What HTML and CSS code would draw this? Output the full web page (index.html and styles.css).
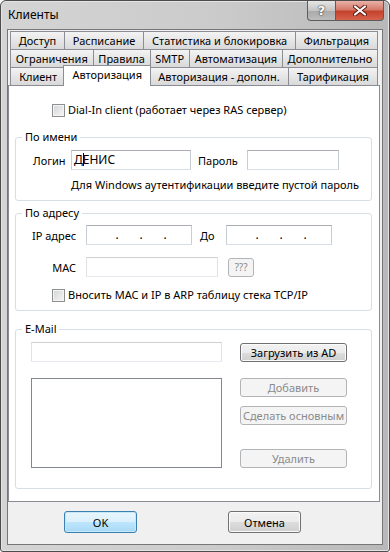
FILE: index.html
```html
<!DOCTYPE html>
<html lang="ru">

<head>
    <meta charset="UTF-8">
    <meta name="viewport" content="width=device-width, initial-scale=1.0">
    <title>Клиенты</title>
    <link rel="stylesheet" href="styles.css">
</head>

<body>
    <div class="window">
        <div class="titlebar">
            <span class="title">Клиенты</span>
            <div class="caption-buttons">
                <div class="cap-btn help">?</div>
                <div class="cap-btn close">
                    <svg width="14" height="11" viewBox="0 0 14 11">
                        <path d="M2 1.5 L12 9.5 M12 1.5 L2 9.5" stroke="#5a1a12" stroke-width="4" stroke-linecap="round" />
                        <path d="M2 1.5 L12 9.5 M12 1.5 L2 9.5" stroke="#ffffff" stroke-width="2.2" stroke-linecap="round" />
                    </svg>
                </div>
            </div>
        </div>

        <div class="client">
            <div class="tabs">
                <div class="tab-row">
                    <div class="tab">Доступ</div>
                    <div class="tab">Расписание</div>
                    <div class="tab">Статистика и блокировка</div>
                    <div class="tab">Фильтрация</div>
                </div>
                <div class="tab-row">
                    <div class="tab">Ограничения</div>
                    <div class="tab">Правила</div>
                    <div class="tab">SMTP</div>
                    <div class="tab">Автоматизация</div>
                    <div class="tab">Дополнительно</div>
                </div>
                <div class="tab-row">
                    <div class="tab">Клиент</div>
                    <div class="tab active">Авторизация</div>
                    <div class="tab">Авторизация - дополн.</div>
                    <div class="tab">Тарификация</div>
                </div>
            </div>

            <div class="panel">
                <label class="check-row dial-in">
                    <span class="checkbox"></span>
                    <span>Dial-In client (работает через RAS сервер)</span>
                </label>

                <div class="group by-name">
                    <div class="group-title">По имени</div>
                    <div class="form-row login-row">
                        <span class="lbl lbl-login">Логин</span>
                        <div class="textbox login">Д<span class="caret"></span>ЕНИС</div>
                        <span class="lbl lbl-pass">Пароль</span>
                        <div class="textbox pass"></div>
                    </div>
                    <div class="hint">Для Windows аутентификации введите пустой пароль</div>
                </div>

                <div class="group by-address">
                    <div class="group-title">По адресу</div>
                    <div class="form-row ip-row">
                        <span class="lbl lbl-addr">IP адрес</span>
                        <div class="textbox ip"><span>.</span><span>.</span><span>.</span></div>
                        <span class="lbl lbl-to">До</span>
                        <div class="textbox ip"><span>.</span><span>.</span><span>.</span></div>
                    </div>
                    <div class="form-row mac-row">
                        <span class="lbl lbl-addr">MAC</span>
                        <div class="textbox mac dim"></div>
                        <div class="btn disabled tiny">???</div>
                    </div>
                    <label class="check-row arp">
                        <span class="checkbox"></span>
                        <span>Вносить MAC и IP в ARP таблицу стека TCP/IP</span>
                    </label>
                </div>

                <div class="group email">
                    <div class="group-title">E-Mail</div>
                    <div class="email-grid">
                        <div class="textbox mail dim"></div>
                        <div class="btn load">Загрузить из AD</div>
                        <div class="listbox"></div>
                        <div class="side-buttons">
                            <div class="btn disabled">Добавить</div>
                            <div class="btn disabled">Сделать основным</div>
                            <div class="btn disabled last">Удалить</div>
                        </div>
                    </div>
                </div>
            </div>

            <div class="footer">
                <div class="btn big default">OK</div>
                <div class="btn big">Отмена</div>
            </div>
        </div>
    </div>
</body>

</html>
```

FILE: styles.css
```css
* {
    box-sizing: border-box;
}
body {
    margin: 0;
    font-family: "Noto Sans", "Open Sans", sans-serif;
    font-size: 11px;
    color: #000;
    background: #fff;
}
.window {
    width: 390px;
    height: 552px;
    display: flex;
    flex-direction: column;
    border: 1px solid #4c4c4c;
    border-radius: 6px 6px 3px 3px;
    background: linear-gradient(to right, #d4d4d4, #cbcbcb 55%, #b8b8b8);
    box-shadow: inset 0 0 0 1px #e4e4e4;
}

/* title bar */
.titlebar {
    height: 28px;
    display: flex;
    align-items: flex-start;
}
.title {
    padding: 6px 0 0 7px;
    line-height: 16px;
    font-size: 12px;
}
.caption-buttons {
    margin-left: auto;
    margin-right: 5px;
    display: flex;
}
.cap-btn {
    height: 20px;
    border: 1px solid #5c5c5c;
    border-top: 0;
    display: flex;
    align-items: center;
    justify-content: center;
}
.help {
    width: 28px;
    border-radius: 0 0 0 4px;
    border-right: 0;
    background: linear-gradient(#e6e6e6, #c4c4c4 50%, #a9a9a9 51%, #bdbdbd);
    color: #fff;
    font-family: "DejaVu Sans", sans-serif;
    font-weight: bold;
    font-size: 13px;
    text-shadow: 0 0 2px #333, 0 0 1px #333;
}
.close {
    width: 49px;
    border-radius: 0 0 4px 0;
    background: linear-gradient(#eab2a8, #d47a6a 45%, #c4412d 55%, #d7624c);
}

/* client area */
.client {
    flex: 1;
    margin: 0 6px 6px;
    border: 1px solid #777;
    background: #f0f0f0;
}
.tabs {
    margin: 1px 0 0 2px;
    width: 368px;
}
.tab-row {
    display: flex;
    height: 18px;
}
.tab {
    flex: 1 1 auto;
    min-width: 0;
    white-space: nowrap;
    overflow: hidden;
    text-align: center;
    line-height: 17px;
    border: 1px solid #8c8e96;
    border-bottom: 0;
    margin-right: -1px;
    background: linear-gradient(#f3f3f3, #e6e6e6 50%, #d9d9d9);
}
.tab:last-child {
    margin-right: 0;
}
.tab.active {
    position: relative;
    z-index: 1;
    align-self: flex-start;
    height: 21px;
    margin: -2px -2px 0 -2px;
    background: #fff;
    line-height: 17px;
}

.panel {
    height: 417px;
    margin-right: 2px;
    border: 1px solid #898c95;
    background: #fff;
    padding: 0 7px 0 6px;
}

.check-row {
    display: flex;
    align-items: center;
    gap: 3px;
    height: 16px;
    line-height: 16px;
}
.dial-in {
    margin-top: 16px;
    padding-left: 37px;
}
.arp {
    margin-top: 10px;
    padding-left: 36px;
}
.checkbox {
    width: 13px;
    height: 13px;
    flex: none;
    border: 1px solid #8e8f8f;
    background: linear-gradient(135deg, #d2d4d6, #f6f6f6);
    box-shadow: inset 0 0 0 1px #f4f4f4;
}

.group {
    border: 1px solid #d5dfe5;
    border-radius: 3px;
    padding-bottom: 7px;
}
.group-title {
    width: fit-content;
    margin: -9px 0 0 6px;
    padding: 0 3px;
    background: #fff;
    line-height: 16px;
}
.by-name {
    margin-top: 19px;
}
.by-address {
    margin-top: 12px;
}
.email {
    margin-top: 18px;
    padding-bottom: 20px;
}

.form-row {
    display: flex;
    align-items: center;
}
.login-row {
    margin-top: 5px;
    padding-left: 17px;
}
.ip-row {
    margin-top: 4px;
    padding-left: 16px;
}
.mac-row {
    margin-top: 12px;
    padding-left: 16px;
}
.lbl {
    white-space: nowrap;
}
.lbl-login {
    width: 38px;
}
.lbl-pass {
    width: 49px;
    margin-left: 7px;
}
.lbl-addr {
    width: 44px;
    margin-right: 10px;
    text-align: right;
}
.lbl-to {
    width: 26px;
    margin-left: 8px;
}

.textbox {
    height: 20px;
    border: 1px solid;
    border-color: #abadb3 #c9ced6 #d8dee6 #c9ced6;
    background: #fff;
    line-height: 18px;
    padding-left: 2px;
    font-size: 12px;
}
.textbox.dim {
    border-color: #cdcfd3 #e0e2e6 #e6e9ee #e0e2e6;
}
.login {
    width: 120px;
}
.caret {
    display: inline-block;
    width: 1px;
    height: 13px;
    margin: 0 -1px 0 0;
    vertical-align: -2px;
    background: #000;
}
.pass {
    width: 92px;
}
.hint {
    margin-top: 7px;
    padding-left: 55px;
    line-height: 16px;
    white-space: nowrap;
}
.ip {
    width: 106px;
    display: flex;
    justify-content: space-around;
    padding: 0 14px 0 18px;
}
.mac {
    width: 132px;
}

.btn {
    height: 19px;
    border: 1px solid #707070;
    border-radius: 3px;
    display: flex;
    align-items: center;
    justify-content: center;
    white-space: nowrap;
    background: linear-gradient(#f2f2f2, #ebebeb 50%, #dddddd 51%, #cfcfcf);
    box-shadow: inset 0 0 0 1px #fbfbfb;
}
.btn.disabled {
    border-color: #b2b5b8;
    background: #f4f4f4;
    box-shadow: none;
    color: #8b8b8b;
}
.tiny {
    width: 26px;
    margin-left: 10px;
    font-size: 10px;
    color: #a3a3a3;
}

.email-grid {
    margin-top: 5px;
    padding-left: 15px;
    display: grid;
    grid-template-columns: 191px 107px;
    column-gap: 18px;
    row-gap: 16px;
    align-items: center;
}
.listbox {
    height: 90px;
    border: 1px solid #828790;
    background: #fff;
}
.side-buttons {
    height: 90px;
    display: flex;
    flex-direction: column;
    gap: 9px;
}
.side-buttons .last {
    margin-top: auto;
}

.footer {
    display: flex;
    gap: 91px;
    padding: 9px 0 0 56px;
}
.btn.big {
    width: 73px;
    height: 22px;
}
.btn.default {
    border-color: #3c7fb1;
    background: linear-gradient(#eaf6fd, #d9f0fc 50%, #bee6fd 51%, #a7d9f5);
    box-shadow: inset 0 0 0 1px #c6e8f8;
}
```
